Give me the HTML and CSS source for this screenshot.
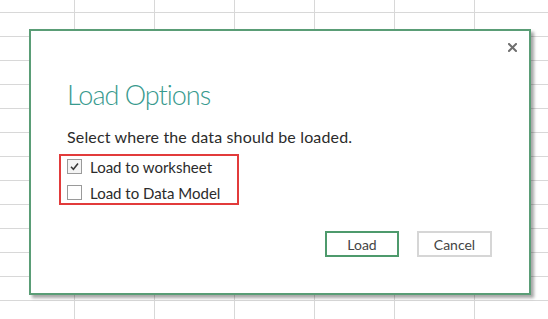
FILE: index.html
```html
<!DOCTYPE html>
<html lang="en">
<head>
<meta charset="utf-8">
<title>Load Options</title>
<link rel="stylesheet" href="styles.css">
</head>
<body>
<div class="dialog">
  <div class="dialog-header">
    <button class="close" aria-label="Close">
      <svg width="9" height="9" viewBox="0 0 9 9"><path d="M1 1 L8 8 M8 1 L1 8" stroke="#6f6f6f" stroke-width="2" stroke-linecap="square"/></svg>
    </button>
  </div>
  <div class="dialog-body">
    <h1 class="title">Load Options</h1>
    <p class="prompt">Select where the data should be loaded.</p>
    <div class="options">
      <label class="option">
        <span class="check checked">
          <svg width="11" height="11" viewBox="0 0 11 11"><path d="M2 5.8 L4.4 8.2 L9 2.6" fill="none" stroke="#3a3a3a" stroke-width="1.6"/></svg>
        </span>
        <span class="option-label">Load to worksheet</span>
      </label>
      <label class="option">
        <span class="check"></span>
        <span class="option-label">Load to Data Model</span>
      </label>
    </div>
  </div>
  <div class="dialog-footer">
    <button class="btn btn-primary">Load</button>
    <button class="btn btn-secondary">Cancel</button>
  </div>
</div>
</body>
</html>
```
FILE: styles.css
```css
html {
  height: 100%;
}
body {
  margin: 0;
  min-height: 100%;
  box-sizing: border-box;
  padding: 29px 0 0 29px;
  font-family: Lato, "Open Sans", sans-serif;
  color: #2b2b2b;
  background-color: #fff;
  background-image:
    linear-gradient(to right, #d8d8d8 1px, transparent 1px),
    linear-gradient(to bottom, #d8d8d8 1px, transparent 1px);
  background-size: 80px 24px, 80px 24px;
  background-position: 74px 0, 0 12px;
}
.dialog {
  width: 502px;
  height: 266px;
  box-sizing: border-box;
  border: 2px solid #5a9d76;
  background: #fff;
  box-shadow: 3px 3px 3px rgba(0, 0, 0, 0.35);
  display: flex;
  flex-direction: column;
}
.dialog-header {
  display: flex;
  justify-content: flex-end;
  padding: 12px 12px 0 0;
}
.close {
  border: 0;
  padding: 0;
  margin: 0;
  background: none;
  width: 9px;
  height: 9px;
  display: block;
}
.close svg {
  display: block;
}
.dialog-body {
  padding-left: 36px;
  display: flex;
  flex-direction: column;
  align-items: flex-start;
}
.title {
  margin: 26px 0 0 0;
  font-size: 27px;
  line-height: 33px;
  font-weight: 300;
  letter-spacing: -1px;
  color: #389a8e;
}
.prompt {
  margin: 16px 0 0 0;
  font-size: 16px;
  line-height: 20px;
  letter-spacing: 0.15px;
  color: #2b2b2b;
}
.options {
  margin: 7px 0 0 -8px;
  width: 180px;
  height: 51px;
  box-sizing: border-box;
  border: 2px solid #e23b3b;
  padding: 0 0 0 6px;
  display: flex;
  flex-direction: column;
  gap: 5px;
}
.option {
  height: 21px;
  display: flex;
  align-items: center;
  gap: 8px;
  font-size: 15px;
  line-height: 20px;
  color: #2b2b2b;
}
.check {
  width: 15px;
  height: 15px;
  box-sizing: border-box;
  border: 1px solid #9a9a9a;
  background: #fff;
  display: flex;
  align-items: center;
  justify-content: center;
  flex: none;
}
.check.checked {
  background: #f4f4f4;
}
.check svg {
  display: block;
}
.dialog-footer {
  display: flex;
  justify-content: flex-end;
  gap: 18px;
  padding-right: 37px;
  margin-top: 26px;
}
.btn {
  width: 74px;
  height: 26px;
  box-sizing: border-box;
  background: #fff;
  font-family: Lato, "Open Sans", sans-serif;
  font-size: 14px;
  color: #444;
  padding: 0;
}
.btn-primary {
  border: 2px solid #4e9a6c;
}
.btn-secondary {
  width: 75px;
  border: 2px solid #d6d6d6;
}
```
